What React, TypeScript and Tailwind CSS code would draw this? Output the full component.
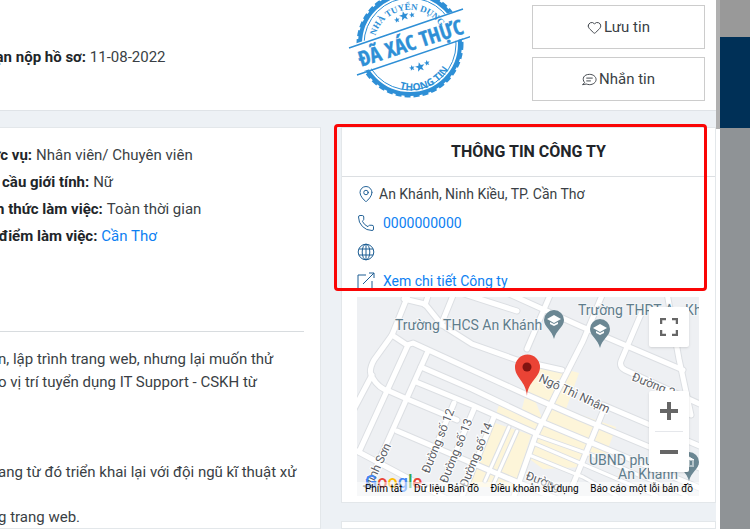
import type { ReactNode } from "react";
import { Heart, MapPin, Phone } from "lucide-react";

interface DetailRow {
	label: string;
	value: string;
	href?: string;
}

const details: DetailRow[] = [
	{ label: "Chức vụ:", value: "Nhân viên/ Chuyên viên" },
	{ label: "Yêu cầu giới tính:", value: "Nữ" },
	{ label: "Hình thức làm việc:", value: "Toàn thời gian" },
	{ label: "Địa điểm làm việc:", value: "Cần Thơ", href: "#can-tho" },
];

const roads = [
	"M52 -4 L35 38 L17 63 Q11 74 15 80 Q22 92 32 94 L50 102 L100 123",
	"M15 78 L-4 114",
	"M47 2 L68 7 L85 28 L115 47 L160 63 L205 73",
	"M68 8 L72 -4",
	"M97 -4 L84 28",
	"M35 38 L50 48 L56 46 L115 73 L168 97 L223 121 L345 172",
	"M64 70 L115 92 L180 123 L345 192",
	"M59 85 L115 108 L178 136",
	"M51 48 L2 155",
	"M71 54 L20 168",
	"M104 -4 L160 14",
	"M150 -4 L223 29 L326 73",
	"M194 -4 L170 52",
	"M246 -4 L226 44 L200 95 L178 140 L156 202",
	"M287 10 L264 64 Q262 70 268 73 L345 108",
	"M310 -4 L322 62 L334 118",
	"M246 108 L345 150",
	"M247 112 L215 190",
	"M97 106 L70 170",
	"M117 112 L88 180",
	"M137 120 L104 202",
	"M-4 152 L60 186 L90 202",
	"M40 134 L115 166 L200 202",
];

// Narrow alleys between the shop blocks
const alleys = [
	"M152 130 L128 184",
	"M160 134 L136 188",
	"M176 146 L230 169 L300 199",
	"M178 138 L240 160 L330 199",
	"M172 158 L226 180 L260 199",
];

function VerifiedStamp() {
	return (
		<svg viewBox="0 0 130 110" className="h-[110px] w-[130px] text-[#2e8fd6]" role="img" aria-label="Đã xác thực">
			<defs>
				<path id="stamp-top" d="M34 50 A36 36 0 0 1 106 42" />
				<path id="stamp-bottom" d="M46 82 A43 43 0 0 0 114 55" />
			</defs>
			<g fill="none" stroke="currentColor">
				<circle cx="70" cy="44" r="50" strokeWidth="4" />
				<circle cx="70" cy="44" r="52" strokeWidth="3" strokeDasharray="6 3" />
				<circle cx="70" cy="44" r="46" strokeWidth="1" />
			</g>
			<path d="M2 48 L118 10 L130 36 L12 75 Z" fill="#fff" />
			<path d="M9 48 L123 9 M17 75 L132 36" stroke="currentColor" strokeWidth="1.5" />
			<g fill="currentColor" fontWeight="700">
				<text fontFamily="Liberation Serif, serif" fontSize="9">
					<textPath href="#stamp-top" startOffset="49%" textAnchor="middle">NHÀ TUYỂN DỤNG</textPath>
				</text>
				<text
					fontFamily="Liberation Sans Narrow, Open Sans Condensed, Roboto, sans-serif"
					fontSize="21"
					stroke="currentColor"
					strokeWidth="0.4"
					textAnchor="middle"
					transform="translate(73 50) rotate(-18)"
				>
					ĐÃ XÁC THỰC
				</text>
				<text fontFamily="Open Sans, sans-serif" fontSize="10">
					<textPath href="#stamp-bottom" startOffset="50%" textAnchor="middle">THONG TIN</textPath>
				</text>
				<Star x={64} y={16} size={5} />
				<Star x={57} y={20} size={3} />
				<Star x={72} y={15} size={3} />
				<Star x={80} y={67} size={5} />
				<Star x={72} y={68} size={3} />
				<Star x={87} y={63} size={3} />
			</g>
		</svg>
	);
}

function Star({ x, y, size }: { x: number; y: number; size: number }) {
	return (
		<path
			transform={`translate(${x} ${y}) rotate(-14) scale(${size})`}
			d="M0 -1 L.25 -.33 L.95 -.31 L.4 .13 L.59 .81 L0 .42 L-.59 .81 L-.4 .13 L-.95 -.31 L-.25 -.33 Z"
		/>
	);
}

function SchoolPin({ x, y }: { x: number; y: number }) {
	return (
		<g transform={`translate(${x} ${y})`}>
			<path d="M0 29 C-2 20 -10 17 -10 10 A10 10 0 0 1 10 10 C10 17 2 20 0 29 Z" fill="#6b8793" />
			<path d="M-7 9 L0 5 L7 9 L0 13 Z M-4 12 L0 14 L4 12 V14 L0 16 L-4 14 Z" fill="#fff" />
		</g>
	);
}

function MapDrawing() {
	return (
		<svg viewBox="0 0 342 199" preserveAspectRatio="xMinYMin slice" className="absolute inset-0 size-full" fontFamily="Roboto, sans-serif">
			<rect width="342" height="199" fill="#eef0f3" />
			<g fill="#fdf5d9">
				<path d="M186 66 L222 76 L209 112 L168 97 Z" />
				<path d="M168 100 L178 103 L190 134 L176 138 L138 120 L142 108 L164 116 Z" />
				<path d="M190 106 L259 130 L248 160 L232 154 L226 170 L186 172 L170 160 Z" />
				<path d="M132 124 L174 138 L158 190 L104 190 Z" />
			</g>
			<g fill="none" strokeLinejoin="round" strokeLinecap="round">
				<g stroke="#dcdfe3">
					{roads.map((d) => (
						<path key={d} d={d} strokeWidth="7" />
					))}
					{alleys.map((d) => (
						<path key={d} d={d} strokeWidth="5" />
					))}
				</g>
				<g stroke="#fff">
					{roads.map((d) => (
						<path key={d} d={d} strokeWidth="5" />
					))}
					{alleys.map((d) => (
						<path key={d} d={d} strokeWidth="3" />
					))}
				</g>
			</g>
			<g fill="#5f7d8c" fontSize="14" stroke="#f4f5f7" strokeWidth="2" paintOrder="stroke">
				<text x="38" y="33">Trường THCS An Khánh</text>
				<text x="221" y="18">Trường THPT An Kh</text>
				<text x="232" y="168">UBND phường</text>
				<text x="261" y="182">An Khánh</text>
			</g>
			<g fill="#5c6066" fontSize="12" stroke="#fff" strokeWidth="2" paintOrder="stroke">
				<text transform="translate(181 84) rotate(25)">Ngô Thì Nhậm</text>
				<text transform="translate(274 83) rotate(22)">Đường 2</text>
				<text transform="translate(72 177) rotate(-68)">Đường số 12</text>
				<text transform="translate(90 187) rotate(-68)">Đường số 13</text>
				<text transform="translate(110 191) rotate(-68)">Đường số 14</text>
				<text transform="translate(13 194) rotate(-65)">Minh Sơn</text>
				<text transform="translate(168 182) rotate(20)">Đường</text>
			</g>
			<SchoolPin x={197} y={13} />
			<SchoolPin x={243} y={22} />
			<g transform="translate(332 155)">
				<path d="M0 29 C-2 20 -10 17 -10 10 A10 10 0 0 1 10 10 C10 17 2 20 0 29 Z" fill="#6b8793" />
				<path d="M-5 8 L0 5 L5 8 Z M-4 9 V13 M0 9 V13 M4 9 V13 M-5 14 H5" stroke="#fff" fill="#fff" />
			</g>
			<path d="M170 99 C169 84 158 81 158 70 A12.500 12.500 0 0 1 183 70 C183 81 171 84 170 99 Z" fill="#ea4335" />
			<circle cx="170" cy="70" r="4.500" fill="#811411" />
		</svg>
	);
}

function CompanyRow({ icon, children }: { icon: ReactNode; children?: ReactNode }) {
	return (
		<li className="flex h-[29px] items-center gap-2 text-[#1f5f94]">
			{icon}
			{children}
		</li>
	);
}

function GlobeIcon() {
	return (
		<svg viewBox="0 0 18 18" className="size-[18px]" fill="none" stroke="currentColor">
			<circle cx="9" cy="9" r="7.800" />
			<ellipse cx="9" cy="9" rx="3.800" ry="7.800" />
			<path d="M9 1 V17 M2 6 H16 M2 12 H16" />
		</svg>
	);
}

function ExternalIcon() {
	return (
		<svg viewBox="0 0 18 18" className="size-[18px]" fill="none" stroke="currentColor">
			<path d="M9 3 H1 V17 H15 V9 M6 12 L17 1 M12 1 H17 V6" />
		</svg>
	);
}

function ChatIcon() {
	return (
		<svg viewBox="0 0 16 16" className="size-[15px]" fill="none" stroke="currentColor" strokeLinecap="round" strokeLinejoin="round">
			<path d="M2.500 11 C-.5 7 2 2.500 8 2.500 C12 2.500 15 5 15 8 C15 11 12 13.500 8 13.500 C6.500 13.500 5.500 13 4.500 12.800 L1 13.500 Z M5 6.500 H11 M5 9.500 H9" />
		</svg>
	);
}

function CompanyMap() {
	return (
		<div className="relative h-[199px] overflow-hidden">
			<MapDrawing />
			<div className="absolute bottom-0 left-2 text-lg leading-7 font-medium" aria-hidden="true">
				<span className="text-[#4285f4]">G</span>
				<span className="text-[#ea4335]">o</span>
				<span className="text-[#fbbc05]">o</span>
				<span className="text-[#4285f4]">g</span>
				<span className="text-[#34a853]">l</span>
				<span className="text-[#ea4335]">e</span>
			</div>
			<button type="button" aria-label="Toàn màn hình" className="absolute top-2.5 right-2.5 flex size-10 items-center justify-center rounded-xs bg-white shadow">
				<svg viewBox="0 0 18 18" className="size-[18px]" fill="none" stroke="#666" strokeWidth="2.500">
					<path d="M1 6 V1 H6 M12 1 H17 V6 M17 12 V17 H12 M6 17 H1 V12" />
				</svg>
			</button>
			<div className="absolute right-2.5 bottom-6 flex w-10 flex-col rounded-xs bg-white shadow">
				<button type="button" aria-label="Phóng to" className="flex h-10 items-center justify-center">
					<svg viewBox="0 0 18 18" className="size-[18px]" stroke="#666" strokeWidth="4">
						<path d="M0 9 H18 M9 0 V18" />
					</svg>
				</button>
				<hr className="mx-1.5 border-gray-200" />
				<button type="button" aria-label="Thu nhỏ" className="flex h-10 items-center justify-center">
					<svg viewBox="0 0 18 18" className="size-[18px]" stroke="#666" strokeWidth="4">
						<path d="M0 9 H18" />
					</svg>
				</button>
			</div>
			<div className="absolute inset-x-0 bottom-0 flex h-3.5 items-center justify-between bg-white/50 pr-1.5 pl-2 text-[10px] leading-none whitespace-nowrap text-black">
				<button type="button">Phím tắt</button>
				<span>Dữ liệu Bản đồ</span>
				<a href="#terms">Điều khoản sử dụng</a>
				<a href="#report">Báo cáo một lỗi bản đồ</a>
			</div>
		</div>
	);
}

export default function App() {
	return (
		<div className="flex h-screen overflow-hidden bg-white font-[Roboto,sans-serif] text-[15px] text-[#3a3f45]">
			<main className="flex min-w-0 flex-1 flex-col bg-[#edf1f5]">
				<header className="flex h-[111px] shrink-0 justify-between border-b border-[#dfe3e7] bg-white">
					<p className="-ml-[15px] pt-[46px] leading-[23px] whitespace-nowrap">
						<strong className="font-bold text-[#212529]">Hạn nộp hồ sơ:</strong> 11-08-2022
					</p>
					<div className="flex gap-[62px] pr-[11px]">
						<VerifiedStamp />
						<div className="flex w-[173px] flex-col gap-2 pt-[5px]">
							<button type="button" className="flex h-11 items-center justify-center gap-0.5 border border-[#ccc]">
								<Heart className="size-[15px]" strokeWidth={1.5} />
								Lưu tin
							</button>
							<button type="button" className="flex h-11 items-center justify-center gap-0.5 border border-[#ccc]">
								<ChatIcon />
								Nhắn tin
							</button>
						</div>
					</div>
				</header>

				<div className="grid min-h-0 flex-1 grid-cols-[minmax(0,1fr)_375px] gap-5 pt-4">
					<section className="overflow-hidden border border-l-0 border-[#e3e7ea] bg-white">
						{/* Job facts */}
						<dl className="-ml-[27px] pt-3.5 leading-[27px] whitespace-nowrap">
							{details.map((row) => (
								<div key={row.label} className="flex gap-1">
									<dt className="font-bold text-[#212529]">{row.label}</dt>
									<dd>
										{row.href ? (
											<a href={row.href} className="text-[#0d7ff2]">
												{row.value}
											</a>
										) : (
											row.value
										)}
									</dd>
								</div>
							))}
						</dl>
						<hr className="mt-[81px] mr-4 border-[#d8dcdf]" />
						{/* Description */}
						<div className="-ml-0.5 flex flex-col pt-4 leading-[23px] whitespace-nowrap">
							<p>
								n, lập trình trang web, nhưng lại muốn thử
								<br />o vị trí tuyển dụng IT Support - CSKH từ
							</p>
							<p className="pt-[67px]">ang từ đó triển khai lại với đội ngũ kĩ thuật xử</p>
							<p className="pt-[22px]">g trang web.</p>
						</div>
					</section>

					<div className="flex flex-col gap-[18px]">
						<section className="relative shrink-0 border border-[#e3e7ea] bg-white">
							<h2 className="border-b border-[#dcdfe2] text-center text-base leading-[48px] font-bold text-[#212529]">
								THÔNG TIN CÔNG TY
							</h2>
							<ul className="px-[15px] pt-0.5 pb-0.5">
								<CompanyRow icon={<MapPin className="-mr-1 size-[18px]" strokeWidth={1.3} />}>
									<span className="text-sm text-[#3a3f45]">An Khánh, Ninh Kiều, TP. Cần Thơ</span>
								</CompanyRow>
								<CompanyRow icon={<Phone className="size-[18px]" strokeWidth={1.3} />}>
									<a href="tel:0000000000" className="text-sm text-[#0d7ff2]">0000000000</a>
								</CompanyRow>
								<CompanyRow icon={<GlobeIcon />} />
								<CompanyRow icon={<ExternalIcon />}>
									<a href="#company" className="text-sm text-[#0d7ff2]">Xem chi tiết Công ty</a>
								</CompanyRow>
							</ul>
							<div className="pr-4 pb-1.5 pl-[15px]">
								<CompanyMap />
							</div>
							{/* Highlight around the contact block */}
							<div className="pointer-events-none absolute -top-1 right-2 -left-2 h-[167px] rounded-sm border-3 border-[#fa0505]" />
						</section>
						<section className="min-h-2 flex-1 border border-[#e3e7ea] bg-white" />
					</div>
				</div>
			</main>

			{/* Page edge and dimmed backdrop */}
			<div className="flex w-1 flex-col bg-white">
				<div className="h-[129px] bg-[#b0b0b0]" />
			</div>
			<aside className="flex w-[30px] flex-col bg-[#8f9396]">
				<div className="h-[37px] bg-[#999]" />
				<div className="h-[91px] bg-[#003057]" />
			</aside>
		</div>
	);
}
